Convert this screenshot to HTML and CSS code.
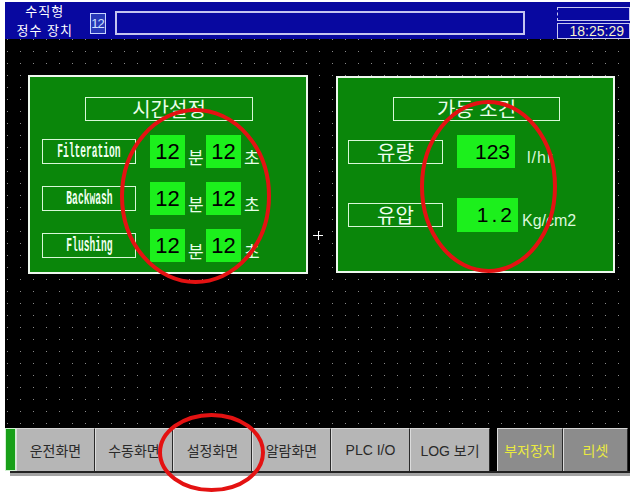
FILE: index.html
```html
<!DOCTYPE html>
<html lang="ko">
<head>
<meta charset="utf-8">
<title>수직형 정수 장치</title>
<link rel="stylesheet" href="styles.css">
</head>
<body>
<div class="screen">
  <header class="top">
    <div class="top-title">
      <div class="tl">수직형</div>
      <div class="tl">정수 장치</div>
    </div>
    <div class="top-num">12</div>
    <div class="top-msg"></div>
    <div class="clock">
      <div class="clock-top"></div>
      <div class="clock-time">18:25:29</div>
    </div>
  </header>

  <main class="work">
    <section class="panel">
      <div class="panel-title">시간설정</div>
      <div class="rows">
        <div class="row">
          <div class="label"><span class="en">Filteration</span></div>
          <div class="val first">12</div><span class="unit-k">분</span>
          <div class="val">12</div><span class="unit-k">초</span>
        </div>
        <div class="row">
          <div class="label"><span class="en">Backwash</span></div>
          <div class="val first">12</div><span class="unit-k">분</span>
          <div class="val">12</div><span class="unit-k">초</span>
        </div>
        <div class="row">
          <div class="label"><span class="en">Flushing</span></div>
          <div class="val first">12</div><span class="unit-k">분</span>
          <div class="val">12</div><span class="unit-k">초</span>
        </div>
      </div>
    </section>

    <section class="panel panel-right">
      <div class="panel-title">가동 조건</div>
      <div class="rrows">
        <div class="row">
          <div class="label rlabel">유량</div>
          <div class="rval">123</div>
          <span class="unit unit-flow">l/hr</span>
        </div>
        <div class="row">
          <div class="label rlabel">유압</div>
          <div class="rval rval-wide">1.2</div>
          <span class="unit unit-press">Kg/cm2</span>
        </div>
      </div>
    </section>

    <span class="plus"></span>
  </main>

  <footer class="bar">
    <div class="strip"></div>
    <div class="btn">운전화면</div>
    <div class="btn w78">수동화면</div>
    <div class="btn">설정화면</div>
    <div class="btn">알람화면</div>
    <div class="btn narrow">PLC I/O</div>
    <div class="btn narrow w80">LOG 보기</div>
    <div class="btn dark w66">부저정지</div>
    <div class="btn dark w65">리셋</div>
  </footer>
  <div class="bar-base"></div>
</div>

<svg class="marks" width="633" height="495" viewBox="0 0 633 495">
  <ellipse cx="195.5" cy="196" rx="73.5" ry="86" />
  <ellipse cx="488.5" cy="186.5" rx="66.5" ry="84.5" />
  <ellipse cx="211.5" cy="452.5" rx="51.5" ry="37.5" />
</svg>
</body>
</html>
```

FILE: styles.css
```css
* { box-sizing: border-box; }

html, body {
  margin: 0;
  padding: 0;
  background: #ffffff;
}

body {
  position: relative;
  width: 633px;
  height: 495px;
  overflow: hidden;
  font-family: "Noto Sans CJK KR", "Liberation Sans", sans-serif;
}

.screen {
  margin: 2px 0 0 5px;
  width: 625px;
}

/* ---------- header ---------- */
.top {
  display: flex;
  align-items: flex-start;
  height: 37px;
  background: #0808a0;
}

.top-title {
  width: 80px;
  color: #ffffff;
  font-size: 13px;
  letter-spacing: 1px;
  text-align: center;
}

.tl {
  height: 18.5px;
  line-height: 18.5px;
}

.top-num {
  margin: 11px 0 0 5px;
  width: 16px;
  height: 21px;
  border: 1px solid #c8d4ff;
  background: #2838b8;
  color: #d0e0ff;
  font: 13px/19px "Liberation Sans", sans-serif;
  letter-spacing: -1px;
  text-align: center;
}

.top-msg {
  margin: 9px 0 0 9px;
  width: 413px;
  height: 24px;
  border: 2px solid #c4c4f0;
}

.clock {
  margin: 5px 0 0 32px;
  width: 73px;
}

.clock-top {
  height: 14px;
  border: 1px solid #c8c8f0;
  border-left-style: dashed;
}

.clock-time {
  margin-top: 2px;
  height: 16px;
  border: 1px solid #c8c8f0;
  color: #f4f0c8;
  font: 14px/14px "Liberation Sans", sans-serif;
  text-align: right;
  padding-right: 5px;
}

/* ---------- work area ---------- */
.work {
  position: relative;
  height: 389px;
  display: flex;
  align-items: flex-start;
  gap: 28px;
  padding: 36px 0 0 23px;
  background-color: #000000;
  background-image:
    linear-gradient(90deg, #000 12px, transparent 12px),
    linear-gradient(#000 11px, #8a8a8a 11px);
  background-size: 13px 12px;
  background-position: 3px 1px;
}

.panel {
  width: 280px;
  height: 199px;
  border: 2px solid #eef8ee;
  background: #0a860a;
  display: flex;
  flex-direction: column;
  color: #eaffea;
}

.panel-right {
  width: 279px;
  height: 197px;
  margin-top: 1px;
}

.panel-title {
  margin: 20px 0 0 55px;
  width: 168px;
  height: 24px;
  border: 1px solid #d8f8d8;
  font-size: 20px;
  line-height: 21px;
  text-align: center;
}

.panel-right .panel-title {
  margin-top: 19px;
  width: 167px;
}

.rows {
  margin: 14px 0 0 12px;
  display: flex;
  flex-direction: column;
  gap: 14px;
}

.row {
  display: flex;
  align-items: center;
  height: 33px;
}

.label {
  width: 94px;
  height: 25px;
  border: 1px solid #d8f8d8;
  display: flex;
  align-items: center;
  justify-content: center;
  color: #f0fff0;
}

.en {
  display: inline-block;
  font: bold 16px/1 "Liberation Mono", monospace;
  transform: scale(0.6, 1.3);
  white-space: nowrap;
}

.val {
  width: 35px;
  height: 33px;
  background: #1cf01c;
  color: #000000;
  font: 22px/33px "Liberation Sans", sans-serif;
  text-align: center;
}

.val.first { margin-left: 14px; }

.unit-k {
  align-self: flex-end;
  width: 21px;
  padding-left: 3px;
  font-size: 17px;
  line-height: 20px;
  margin-bottom: 1px;
  color: #e8ffe8;
}

/* right panel rows */
.rrows {
  margin: 14px 0 0 10px;
  display: flex;
  flex-direction: column;
  gap: 30px;
}

.rlabel {
  width: 95px;
  height: 24px;
  font-size: 20px;
  line-height: 22px;
}

.rval {
  margin-left: 14px;
  width: 58px;
  height: 33px;
  background: #1cf01c;
  color: #000000;
  font: 21px/33px "Liberation Sans", sans-serif;
  text-align: right;
  padding-right: 5px;
}

.rval-wide {
  width: 61px;
  height: 34px;
  line-height: 34px;
  letter-spacing: 3px;
  padding-right: 3px;
}

.unit {
  align-self: flex-end;
  color: #dcf8dc;
  font: 16px/18px "Liberation Sans", sans-serif;
}

.unit-flow { margin: 0 0 1px 12px; letter-spacing: 1px; }
.unit-press { margin: 0 0 1px 4px; }

.plus {
  position: absolute;
  left: 308px;
  top: 192px;
  width: 10px;
  height: 9px;
  background:
    linear-gradient(#ffffff, #ffffff) center / 10px 1px no-repeat,
    linear-gradient(#ffffff, #ffffff) center / 1px 9px no-repeat;
}

/* ---------- bottom bar ---------- */
.bar {
  display: flex;
  height: 43px;
  background: #000000;
}

.strip {
  width: 11px;
  background: #18a018;
  border: 1px solid #d0f0d0;
}

.btn {
  width: 79px;
  display: flex;
  align-items: center;
  justify-content: center;
  background: #b6b6b6;
  border-top: 1px solid #d6d6d6;
  border-left: 1px solid #dcdcdc;
  border-right: 1px solid #2a2a2a;
  color: #2a2a2a;
  font-size: 14px;
}

.btn.narrow { font-family: "Liberation Sans", "Noto Sans CJK KR", sans-serif; }
.btn.w78 { width: 78px; }
.btn.w80 { width: 80px; }
.btn.w66 { width: 66px; margin-left: 7px; }
.btn.w65 { width: 65px; }

.btn.dark {
  background: #8c8c8c;
  color: #eaea40;
}

.bar-base {
  margin-left: 5px;
  width: 620px;
  height: 5px;
  border-top: 2px solid #222222;
  background: #a4a4a4;
}

/* ---------- annotation ellipses ---------- */
.marks {
  position: absolute;
  left: 0;
  top: 0;
  pointer-events: none;
}

.marks ellipse {
  fill: none;
  stroke: #e41212;
  stroke-width: 4;
}
```
